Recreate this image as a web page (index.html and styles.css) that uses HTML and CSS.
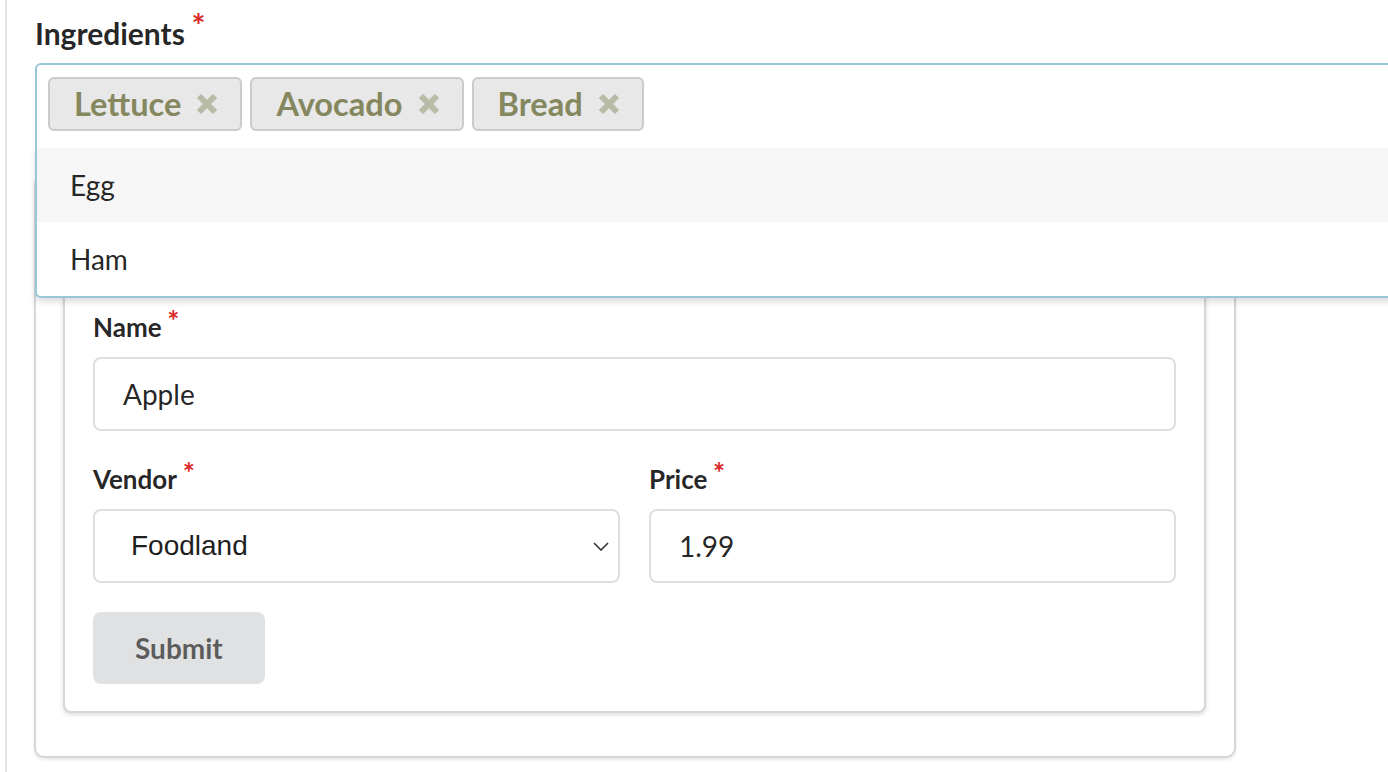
FILE: index.html
```html
<!DOCTYPE html>
<html lang="en">
<head>
<meta charset="utf-8">
<title>Product form</title>
<link rel="stylesheet" href="styles.css">
</head>
<body>
<div class="page">
  <div class="field required ing">
    <label class="label label-lg">Ingredients</label>
    <div class="dropdown">
      <span class="tag">Lettuce<svg class="x" viewBox="0 0 22 20" width="22" height="20"><path d="M3 2 L19 18 M19 2 L3 18"/></svg></span>
      <span class="tag">Avocado<svg class="x" viewBox="0 0 22 20" width="22" height="20"><path d="M3 2 L19 18 M19 2 L3 18"/></svg></span>
      <span class="tag">Bread<svg class="x" viewBox="0 0 22 20" width="22" height="20"><path d="M3 2 L19 18 M19 2 L3 18"/></svg></span>
      <div class="menu">
        <div class="item selected">Egg</div>
        <div class="item">Ham</div>
      </div>
    </div>
  </div>

  <div class="card outer">
    <div class="card inner">
      <div class="field required name-field">
        <label class="label">Name</label>
        <input class="input" type="text" value="Apple">
      </div>
      <div class="two">
        <div class="field required">
          <label class="label">Vendor</label>
          <div class="select">
            <span>Foodland</span>
            <svg class="chev" viewBox="0 0 16 9" width="16" height="9"><path d="M1 1 L8 8 L15 1"/></svg>
          </div>
        </div>
        <div class="field required">
          <label class="label">Price</label>
          <input class="input" type="text" value="1.99">
        </div>
      </div>
      <button class="btn" type="button">Submit</button>
    </div>
  </div>
</div>
</body>
</html>
```

FILE: styles.css
```css
html, body {
  margin: 0;
  padding: 0;
  background: #fff;
}
body {
  overflow: hidden;
  font-family: Lato, "Noto Sans", sans-serif;
  color: rgba(0, 0, 0, 0.87);
}
.page {
  box-sizing: border-box;
  width: 1460px;
  min-height: 772px;
  margin-left: 5px;
  border-left: 2px solid #e4e4e4;
  padding: 18px 0 0 27px;
}

/* labels */
.label {
  display: block;
  font-weight: 700;
  font-size: 26px;
  line-height: 26px;
  margin-bottom: 17px;
  color: rgba(0, 0, 0, 0.87);
}
.label-lg {
  font-size: 30px;
  line-height: 30px;
  margin-bottom: 15px;
}
.required > .label::after {
  content: "*";
  color: #db2828;
  font-size: 1.1em;
  line-height: 0;
  margin-left: 0.2em;
  vertical-align: 0.2em;
}

/* ingredients dropdown */
.ing {
  margin-left: 1px;
  margin-bottom: 26px;
}
.dropdown {
  position: relative;
  box-sizing: border-box;
  width: 1420px;
  display: flex;
  gap: 8px;
  border: 2px solid #96c8da;
  border-bottom: 0;
  border-radius: 6px 6px 0 0;
  padding: 12px 0 17px 11px;
  background: #fff;
}
.tag {
  display: inline-flex;
  align-items: center;
  gap: 15px;
  box-sizing: border-box;
  height: 54px;
  padding: 0 22px 0 24px;
  background: #e8e8e8;
  border: 2px solid #cbcbcb;
  border-radius: 6px;
  color: #85875f;
  font-weight: 700;
  font-size: 32.6px;
  line-height: 1;
}
.x {
  display: block;
  fill: none;
  stroke: #b9bba7;
  stroke-width: 6;
}
.menu {
  position: absolute;
  z-index: 10;
  top: 100%;
  left: -2px;
  width: calc(100% + 4px);
  box-sizing: border-box;
  background: #fff;
  border: 2px solid #96c8da;
  border-top: 0;
  border-radius: 0 0 6px 6px;
  box-shadow: 0 4px 6px rgba(34, 36, 38, 0.15);
}
.item {
  display: flex;
  align-items: center;
  height: 74px;
  padding-left: 33px;
  font-size: 28px;
  color: rgba(0, 0, 0, 0.87);
}
.item.selected {
  background: #f6f6f6;
}

/* cards */
.card {
  box-sizing: border-box;
  background: #fff;
  border: 2px solid #d6d6d7;
}
.outer {
  width: 1202px;
  border-radius: 10px;
  padding: 28px 28px 43px 27px;
  box-shadow: 0 2px 3px rgba(34, 36, 38, 0.1);
}
.inner {
  border-radius: 8px;
  padding: 108px 28px 27px 28px;
  box-shadow: 0 2px 4px rgba(34, 36, 38, 0.15);
}

/* fields */
.name-field {
  margin-bottom: 35px;
}
.two {
  display: grid;
  grid-template-columns: 1fr 1fr;
  gap: 29px;
  margin-bottom: 29px;
}
.input {
  display: block;
  box-sizing: border-box;
  width: 100%;
  height: 74px;
  margin: 0;
  padding: 0 28px;
  border: 2px solid #dededf;
  border-radius: 8px;
  font-family: Lato, "Noto Sans", sans-serif;
  font-size: 28px;
  color: rgba(0, 0, 0, 0.87);
  background: #fff;
  outline: none;
}
.select {
  display: flex;
  align-items: center;
  justify-content: space-between;
  box-sizing: border-box;
  height: 74px;
  padding: 0 9px 0 36px;
  border: 2px solid #dededf;
  border-radius: 8px;
  font-family: "Liberation Sans", Arial, sans-serif;
  font-size: 28px;
  color: #1f1f1f;
}
.chev {
  display: block;
  fill: none;
  stroke: #333;
  stroke-width: 1.6;
}

/* button */
.btn {
  display: block;
  height: 72px;
  padding: 0 42px;
  border: 0;
  border-radius: 8px;
  background: #e0e1e2;
  color: rgba(0, 0, 0, 0.6);
  font-family: Lato, "Noto Sans", sans-serif;
  font-weight: 700;
  font-size: 28px;
}
```
